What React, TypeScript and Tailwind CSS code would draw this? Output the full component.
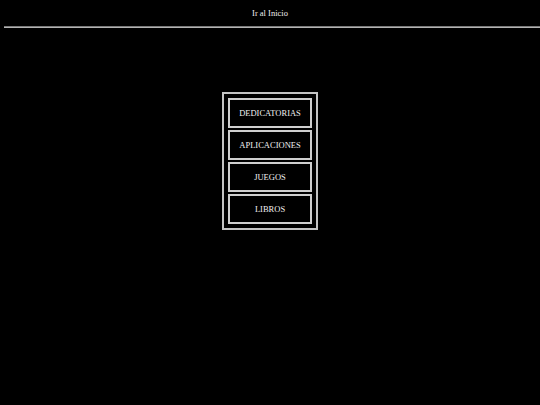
import React from "react";

const items = ["DEDICATORIAS", "APLICACIONES", "JUEGOS", "LIBROS"];

export default function App() {
	return (
		<div className="min-h-[405px] w-full bg-black text-[#f0f0f0] antialiased font-['Liberation_Serif','Times_New_Roman',serif]">
			<div className="pt-[8px] text-center text-[8.5px] leading-[10px]">
				Ir al Inicio
			</div>
			<div className="mt-[8px] ml-[4px] border-t border-t-[#7a7a7a] border-b border-b-[#b4b4b4]" />
			<div className="mt-[64px] flex justify-center">
				<div className="flex w-[96px] flex-col gap-[2px] border-2 border-[#c4c4c4] p-[4px]">
					{items.map((item) => (
						<a
							key={item}
							href="#"
							className="flex h-[30px] items-center justify-center border-2 border-[#cfcfcf] text-[8.5px] leading-none text-[#f0f0f0]"
						>
							{item}
						</a>
					))}
				</div>
			</div>
		</div>
	);
}
